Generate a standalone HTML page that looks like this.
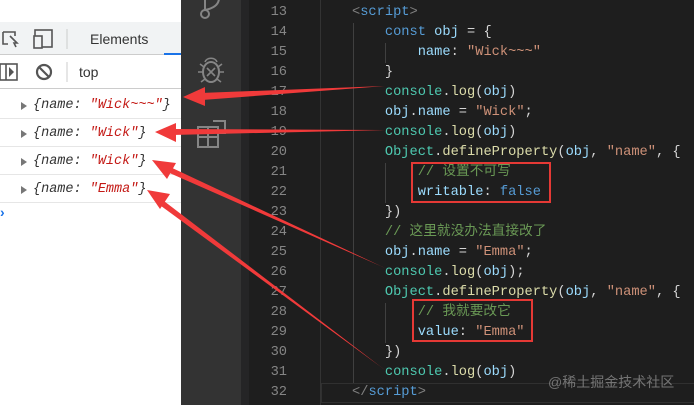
<!DOCTYPE html>
<html><head><meta charset="utf-8"><style>
*{margin:0;padding:0;box-sizing:border-box}
body{width:694px;height:405px;overflow:hidden;position:relative;background:#1e1e1e;font-family:"Liberation Sans",sans-serif}
#left{position:absolute;left:0;top:0;width:181px;height:405px;background:#fff}
#act{position:absolute;left:181px;top:0;width:60px;height:405px;background:#333}
.ln{position:absolute;left:241px;width:46px;text-align:right;color:#858585;font:13.7px "Liberation Mono",monospace;line-height:20px}
.cd{position:absolute;left:352px;white-space:pre;color:#d4d4d4;font:13.7px "Liberation Mono","Noto Sans CJK SC",monospace;line-height:20px}
.t{color:#808080}.tg{color:#569cd6}.k{color:#569cd6}.v{color:#9cdcfe}.s{color:#ce9178}.c{color:#6a9955}.o{color:#4ec9b0}.f{color:#dcdcaa}
.cl{position:absolute;left:33px;font:italic 13.5px "Liberation Mono",monospace;color:#333}
.cl b{font-weight:normal;color:#c41a16}
.tri{position:absolute;left:21px;width:0;height:0;border-left:6px solid #777;border-top:4px solid transparent;border-bottom:4px solid transparent}
.sep{position:absolute;left:0;width:181px;height:1px;background:#e6e6e6}
</style></head><body>
<div id="left">
 <div style="position:absolute;top:22px;left:0;width:181px;height:33px;background:#f1f3f4;border-bottom:1px solid #ccc"></div>
 <div style="position:absolute;top:56px;left:0;width:181px;height:33px;background:#fff;border-bottom:1px solid #ccc"></div>
 <svg style="position:absolute;left:0;top:22px" width="181" height="67">
  <path d="M3 10h12v4M3 10v12h5" stroke="#555" stroke-width="1.6" fill="none"/><path d="M10 14l7 7-3 0 2 4" stroke="#555" stroke-width="1.6" fill="none"/>
  <rect x="35" y="8" width="17" height="17" stroke="#555" stroke-width="1.6" fill="none"/><rect x="34" y="14" width="8" height="12" stroke="#555" stroke-width="1.6" fill="#f1f3f4"/>
  <line x1="67" y1="7" x2="67" y2="27" stroke="#ccc"/>
  <rect x="164" y="31" width="17" height="2" fill="#1a73e8"/>
  <rect x="0" y="42" width="17" height="16" stroke="#555" stroke-width="1.6" fill="none"/><line x1="6" y1="42" x2="6" y2="58" stroke="#555" stroke-width="1.6"/><path d="M9 45l5 5-5 5z" fill="#555"/>
  <circle cx="44" cy="50" r="7" stroke="#555" stroke-width="2.2" fill="none"/><line x1="39" y1="45" x2="49" y2="55" stroke="#555" stroke-width="2.2"/>
  <line x1="67" y1="40" x2="67" y2="60" stroke="#ccc"/>
 </svg>
 <div style="position:absolute;left:90px;top:31px;font-size:14px;color:#333">Elements</div>
 <div style="position:absolute;left:79px;top:64px;font-size:14px;color:#333">top</div>
 <div class="tri" style="top:102px"></div><div class="cl" style="top:98px">{name: <b>"Wick~~~"</b>}</div>
 <div class="sep" style="top:118px"></div>
 <div class="tri" style="top:130px"></div><div class="cl" style="top:126px">{name: <b>"Wick"</b>}</div>
 <div class="sep" style="top:146px"></div>
 <div class="tri" style="top:158px"></div><div class="cl" style="top:154px">{name: <b>"Wick"</b>}</div>
 <div class="sep" style="top:174px"></div>
 <div class="tri" style="top:186px"></div><div class="cl" style="top:182px">{name: <b>"Emma"</b>}</div>
 <div class="sep" style="top:202px"></div>
 <div style="position:absolute;left:0;top:204px;color:#1a73e8;font-size:14px;font-weight:bold">›</div>
</div>
<div id="act">
 <svg width="60" height="160">
  <circle cx="24" cy="14" r="4" stroke="#858585" stroke-width="2" fill="none"/><path d="M24 10V-2M24 10c10-2 14-6 14-12" stroke="#858585" stroke-width="2" fill="none"/>
  <ellipse cx="30" cy="72" rx="8" ry="10" stroke="#858585" stroke-width="2" fill="none"/><path d="M24 62c2-5 10-5 12 0M17 72h5M38 72h5M19 64l4 3M41 64l-4 3M20 82l4-3M40 82l-4-3M26 68l8 8M34 68l-8 8" stroke="#858585" stroke-width="1.6" fill="none"/>
  <path d="M17 127h20v20H17zM17 137h20M27 127v20M32 121h12v12h-7" stroke="#858585" stroke-width="2" fill="none"/>
 </svg>
</div>
<div style="position:absolute;left:241px;top:0;width:8px;height:405px;background:#252526"></div>
<div style="position:absolute;left:320px;top:0;width:1px;height:405px;background:#333"></div>
<div style="position:absolute;left:321px;top:383px;width:373px;height:20px;border:1px solid #303030;border-right:none"></div>
<div style="position:absolute;left:353px;top:23px;width:1px;height:360px;background:#404040"></div>
<div style="position:absolute;left:385px;top:43px;width:1px;height:20px;background:#404040"></div>
<div style="position:absolute;left:385px;top:163px;width:1px;height:40px;background:#404040"></div>
<div style="position:absolute;left:385px;top:303px;width:1px;height:40px;background:#404040"></div>
<div class="ln" style="top:3px">13<br>14<br>15<br>16<br>17<br>18<br>19<br>20<br>21<br>22<br>23<br>24<br>25<br>26<br>27<br>28<br>29<br>30<br>31<br>32</div>
<div class="cd" style="top:3px"><span class="t">&lt;</span><span class="tg">script</span><span class="t">&gt;</span>
    <span class="k">const</span> <span class="v">obj</span> = {
        <span class="v">name</span>: <span class="s">"Wick~~~"</span>
    }
    <span class="o">console</span>.<span class="f">log</span>(<span class="v">obj</span>)
    <span class="v">obj</span>.<span class="v">name</span> = <span class="s">"Wick"</span>;
    <span class="o">console</span>.<span class="f">log</span>(<span class="v">obj</span>)
    <span class="o">Object</span>.<span class="f">defineProperty</span>(<span class="v">obj</span>, <span class="s">"name"</span>, {
        <span class="c">// 设置不可写</span>
        <span class="v">writable</span>: <span class="k">false</span>
    })
    <span class="c">// 这里就没办法直接改了</span>
    <span class="v">obj</span>.<span class="v">name</span> = <span class="s">"Emma"</span>;
    <span class="o">console</span>.<span class="f">log</span>(<span class="v">obj</span>);
    <span class="o">Object</span>.<span class="f">defineProperty</span>(<span class="v">obj</span>, <span class="s">"name"</span>, {
        <span class="c">// 我就要改它</span>
        <span class="v">value</span>: <span class="s">"Emma"</span>
    })
    <span class="o">console</span>.<span class="f">log</span>(<span class="v">obj</span>)
<span class="t">&lt;/</span><span class="tg">script</span><span class="t">&gt;</span></div>
<div style="position:absolute;left:411px;top:162px;width:140px;height:41px;border:2px solid #e53935"></div>
<div style="position:absolute;left:412px;top:299px;width:121px;height:43px;border:2px solid #e53935"></div>
<div style="position:absolute;left:548px;top:372px;color:#8a8a8a;font:14px 'Liberation Sans','Noto Sans CJK SC',sans-serif;opacity:.8">@稀土掘金技术社区</div>
<svg style="position:absolute;left:0;top:0" width="694" height="405">
 <g fill="#f03a3a">
  <polygon points="385,86 200,93 202,100"/><polygon points="183,97 205,87 205,106"/>
  <polygon points="385,130 172,129 172,135"/><polygon points="155,132 176,123 176,142"/>
  <polygon points="385,268 168,166 165,171"/><polygon points="152,160 176,163 167,179"/>
  <polygon points="385,370 160,198 157,203"/><polygon points="147,190 170,194 160,209"/>
 </g>
</svg>
</body></html>
